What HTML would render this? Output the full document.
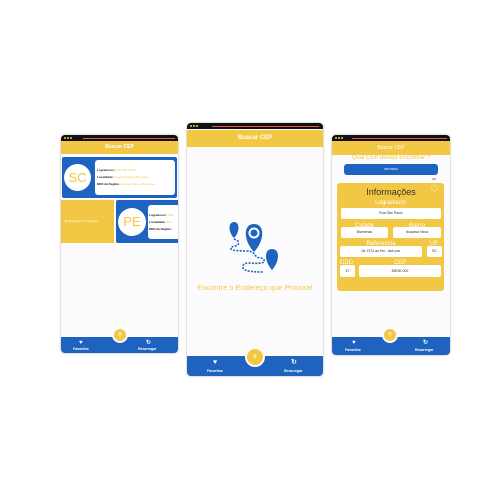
<!DOCTYPE html>
<html><head><meta charset="utf-8"><style>
*{margin:0;padding:0;box-sizing:border-box}
body{width:500px;height:500px;background:#fff;position:relative;overflow:hidden;font-family:"Liberation Sans",sans-serif}
.a{position:absolute}
.ph{position:absolute;background:#fcfcfe;border-radius:4px;overflow:hidden;box-shadow:0 0 2px rgba(0,0,0,.35)}
.sb{position:absolute;left:0;right:0;top:0;height:6px;background:#111}
.sb i{position:absolute;top:2px;width:2px;height:2px;background:#f2c94c;border-radius:1px}
.sb b{position:absolute;top:2.5px;height:1px;background:#e05555}
.hd{position:absolute;left:0;right:0;background:#f2c744;color:#fff;font-weight:bold;font-size:6px;text-align:center}
.nav{position:absolute;left:0;right:0;bottom:0;background:#1e63c0;color:#fff;font-size:3.5px;font-weight:bold}
.fab{position:absolute;border-radius:50%;background:#f2c744;border:2px solid #fcfcfe;color:#fff;text-align:center;font-size:5px;font-weight:bold}
.y{background:#f2c744}.bl{background:#1e63c0}
.w{background:#fff;border-radius:2px}
.t{font-size:3px;color:#222;font-weight:bold;white-space:nowrap}
.t span{color:#f2c744;font-weight:normal}
.lbl{position:absolute;color:#fff;font-size:6px;text-align:center}
.fld{position:absolute;background:#fff;border-radius:2px;font-size:3.5px;color:#333;text-align:center}
</style></head><body>

<!-- Phone 1 -->
<div class="ph" style="left:61px;top:135px;width:117px;height:218px">
 <div class="sb"><i style="left:3px"></i><i style="left:6px"></i><i style="left:9px"></i><b style="left:22px;right:3px"></b></div>
 <div class="hd" style="top:6px;height:13px;line-height:13px;font-size:5px">Buscar CEP</div>
 <div class="a bl" style="left:1px;top:22px;width:115px;height:41px;border-radius:2px"></div>
 <div class="a" style="left:3px;top:29px;width:27px;height:27px;border-radius:50%;background:#fff;color:#f2c744;font-size:13px;text-align:center;line-height:27px">SC</div>
 <div class="a w" style="left:34px;top:25px;width:80px;height:35px;border-radius:3px"></div>
 <div class="a t" style="left:36px;top:33px">Logradouro: <span>Rua São Paulo</span></div>
 <div class="a t" style="left:36px;top:40px">Localidade: <span>Itoupava Seca, Blumenau</span></div>
 <div class="a t" style="left:36px;top:47px">DDD da Região: <span>Itoupava Seca, Blumenau</span></div>
 <div class="a y" style="left:0;top:65px;width:53px;height:43px"></div>
 <div class="a" style="left:4px;top:84px;font-size:3px;color:#fff">▮ &nbsp;Remover do Favoritos</div>
 <div class="a bl" style="left:55px;top:65px;width:64px;height:43px;border-radius:2px"></div>
 <div class="a" style="left:57px;top:73px;width:28px;height:28px;border-radius:50%;background:#fff;color:#f2c744;font-size:13px;text-align:center;line-height:28px">PE</div>
 <div class="a w" style="left:87px;top:70px;width:32px;height:34px;border-radius:3px 0 0 3px;overflow:hidden"><div class="t" style="margin:7px 0 0 1px;line-height:7px">Logradouro: <span>Rua</span><br>Localidade: <span>Alto</span><br>DDD da Região:</div></div>
 <div class="nav" style="height:16px"><div class="a" style="left:18px;top:3px;font-size:6px">♥</div><div class="a" style="left:12px;top:10px">Favoritos</div><div class="a" style="left:85px;top:2px;font-size:6px">↻</div><div class="a" style="left:77px;top:10px">Recarregar</div></div>
 <div class="fab" style="left:51px;top:192px;width:16px;height:16px;line-height:12px">⚲</div>
</div>

<!-- Phone 2 -->
<div class="ph" style="left:187px;top:123px;width:136px;height:253px">
 <div class="sb"><i style="left:3px"></i><i style="left:6px"></i><i style="left:9px"></i><b style="left:25px;right:4px"></b></div>
 <div class="hd" style="top:7px;height:17px;line-height:17px">Buscar CEP</div>
 <svg class="a" style="left:40px;top:97px" width="60" height="55" viewBox="0 0 60 55">
  <path d="M7 18 C1 12 1 2 7 2 C13 2 13 12 7 18Z" fill="#1e63c0"/>
  <path d="M27 32 C16 20 16 4 27 4 C38 4 38 20 27 32Z" fill="#1e63c0"/>
  <circle cx="27" cy="13" r="4.5" fill="none" stroke="#fff" stroke-width="2"/>
  <path d="M45 50 C37 41 37 29 45 29 C53 29 53 41 45 50Z" fill="#1e63c0"/>
  <path d="M7 19 L11 21 Q13 25 8 26 Q3 27 4 29 Q6 31 20 31 Q26 31 28 35 Q30 38 34 38 Q38 39 37 42 Q34 44 22 43 Q15 43 16 48 Q17 52 36 52" fill="none" stroke="#1e63c0" stroke-width="1.6" stroke-dasharray="2 1.3"/>
 </svg>
 <div class="a" style="left:0;right:0;top:160px;text-align:center;color:#f2c744;font-size:7.5px">Encontre o Endereço que Procura!</div>
 <div class="nav" style="height:20px"><div class="a" style="left:26px;top:3px;font-size:7px">♥</div><div class="a" style="left:20px;top:13px">Favoritos</div><div class="a" style="left:104px;top:2px;font-size:7px">↻</div><div class="a" style="left:97px;top:13px">Recarregar</div></div>
 <div class="fab" style="left:58px;top:224px;width:20px;height:20px;line-height:16px">⚲</div>
</div>

<!-- Phone 3 -->
<div class="ph" style="left:332px;top:135px;width:118px;height:220px">
 <div class="sb"><i style="left:3px"></i><i style="left:6px"></i><i style="left:9px"></i><b style="left:20px;right:3px"></b></div>
 <div class="hd" style="top:6px;height:14px;line-height:14px;font-size:5px;font-weight:normal">Buscar CEP</div>
 <div class="a" style="left:0;right:0;top:20px;text-align:center;color:#f2c744;font-size:6px">Qual CEP deseja Encontrar ?</div>
 <div class="a bl" style="left:12px;top:29px;width:94px;height:11px;border-radius:3px;color:#fff;font-size:3px;text-align:center;line-height:11px">89070300</div>
 <div class="a" style="left:100px;top:42px;font-size:3px;color:#666">8/8</div>
 <div class="a y" style="left:5px;top:48px;width:107px;height:108px;border-radius:3px"></div>
 <div class="a" style="left:0;right:0;top:52px;text-align:center;font-size:9px;color:#333">Informações</div>
 <div class="a" style="left:98px;top:49px;font-size:10px;color:#fff">♡</div>
 <div class="lbl" style="left:5px;width:107px;top:65px">Logradouro</div>
 <div class="fld" style="left:9px;top:73px;width:100px;height:11px;line-height:11px">Rua São Paulo</div>
 <div class="lbl" style="left:9px;width:47px;top:88px">Cidade</div>
 <div class="lbl" style="left:61px;width:48px;top:88px">Bairro</div>
 <div class="fld" style="left:9px;top:92px;width:47px;height:11px;line-height:11px">Blumenau</div>
 <div class="fld" style="left:61px;top:92px;width:48px;height:11px;line-height:11px">Itoupava Seca</div>
 <div class="lbl" style="left:8px;width:82px;top:106px">Referencia</div>
 <div class="lbl" style="left:94px;width:16px;top:106px">UF</div>
 <div class="fld" style="left:8px;top:111px;width:82px;height:11px;line-height:11px">de 1374 ao fim - lado par</div>
 <div class="fld" style="left:95px;top:111px;width:15px;height:11px;line-height:11px">SC</div>
 <div class="lbl" style="left:8px;width:16px;top:125px;text-align:left">DDD</div>
 <div class="lbl" style="left:27px;width:82px;top:125px">CEP</div>
 <div class="fld" style="left:8px;top:130px;width:15px;height:12px;line-height:12px">47</div>
 <div class="fld" style="left:27px;top:130px;width:82px;height:12px;line-height:12px">89030-000</div>
 <div class="nav" style="height:18px"><div class="a" style="left:20px;top:3px;font-size:6px">♥</div><div class="a" style="left:13px;top:11px">Favoritos</div><div class="a" style="left:91px;top:2px;font-size:6px">↻</div><div class="a" style="left:83px;top:11px">Recarregar</div></div>
 <div class="fab" style="left:50px;top:192px;width:16px;height:16px;line-height:12px">⚲</div>
</div>
</body></html>
